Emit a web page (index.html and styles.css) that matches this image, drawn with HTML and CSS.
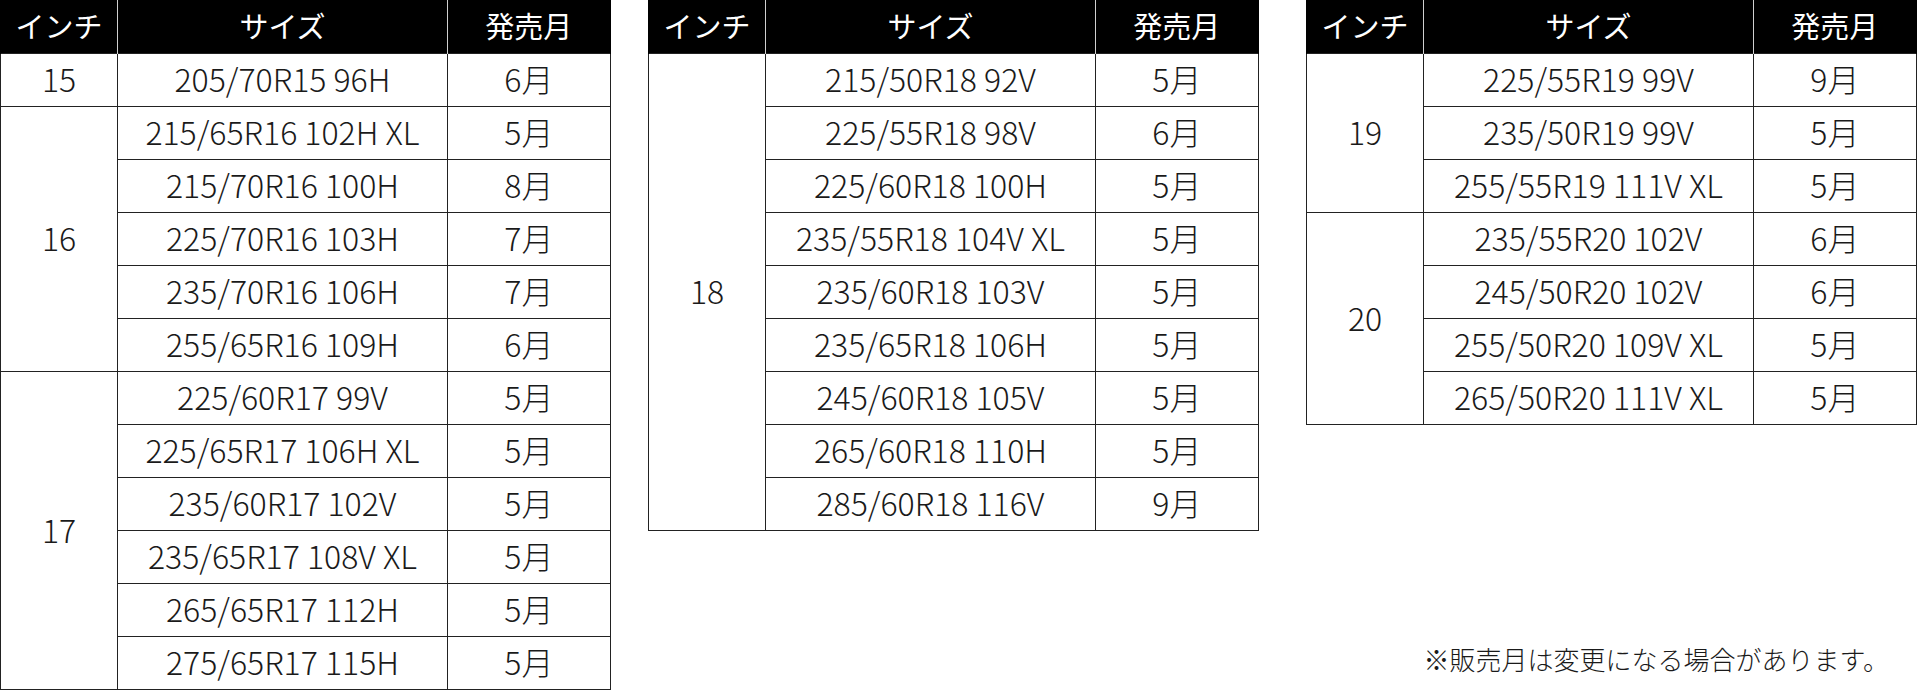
FILE: index.html
```html
<!DOCTYPE html>
<html lang="ja">
<head>
<meta charset="utf-8">
<title>発売月</title>
<link rel="stylesheet" href="styles.css">
</head>
<body>
<div class="page">
  <div class="col col-1">
    <table class="tbl">
      <thead><tr><th class="c-inch">インチ</th><th class="c-size">サイズ</th><th class="c-month">発売月</th></tr></thead>
      <tbody>
        <tr><td>15</td><td>205/70R15 96H</td><td>6月</td></tr>
        <tr><td rowspan="5">16</td><td>215/65R16 102H XL</td><td>5月</td></tr>
        <tr><td>215/70R16 100H</td><td>8月</td></tr>
        <tr><td>225/70R16 103H</td><td>7月</td></tr>
        <tr><td>235/70R16 106H</td><td>7月</td></tr>
        <tr><td>255/65R16 109H</td><td>6月</td></tr>
        <tr><td rowspan="6">17</td><td>225/60R17 99V</td><td>5月</td></tr>
        <tr><td>225/65R17 106H XL</td><td>5月</td></tr>
        <tr><td>235/60R17 102V</td><td>5月</td></tr>
        <tr><td>235/65R17 108V XL</td><td>5月</td></tr>
        <tr><td>265/65R17 112H</td><td>5月</td></tr>
        <tr><td>275/65R17 115H</td><td>5月</td></tr>
      </tbody>
    </table>
  </div>
  <div class="col col-2">
    <table class="tbl">
      <thead><tr><th class="c-inch">インチ</th><th class="c-size">サイズ</th><th class="c-month">発売月</th></tr></thead>
      <tbody>
        <tr><td rowspan="9">18</td><td>215/50R18 92V</td><td>5月</td></tr>
        <tr><td>225/55R18 98V</td><td>6月</td></tr>
        <tr><td>225/60R18 100H</td><td>5月</td></tr>
        <tr><td>235/55R18 104V XL</td><td>5月</td></tr>
        <tr><td>235/60R18 103V</td><td>5月</td></tr>
        <tr><td>235/65R18 106H</td><td>5月</td></tr>
        <tr><td>245/60R18 105V</td><td>5月</td></tr>
        <tr><td>265/60R18 110H</td><td>5月</td></tr>
        <tr><td>285/60R18 116V</td><td>9月</td></tr>
      </tbody>
    </table>
  </div>
  <div class="col col-3">
    <table class="tbl">
      <thead><tr><th class="c-inch">インチ</th><th class="c-size">サイズ</th><th class="c-month">発売月</th></tr></thead>
      <tbody>
        <tr><td rowspan="3">19</td><td>225/55R19 99V</td><td>9月</td></tr>
        <tr><td>235/50R19 99V</td><td>5月</td></tr>
        <tr><td>255/55R19 111V XL</td><td>5月</td></tr>
        <tr><td rowspan="4">20</td><td>235/55R20 102V</td><td>6月</td></tr>
        <tr><td>245/50R20 102V</td><td>6月</td></tr>
        <tr><td>255/50R20 109V XL</td><td>5月</td></tr>
        <tr><td>265/50R20 111V XL</td><td>5月</td></tr>
      </tbody>
    </table>
    <p class="note">※販売月は変更になる場合があります。</p>
  </div>
</div>
</body>
</html>
```
FILE: styles.css
```css
html, body {
  margin: 0;
  padding: 0;
  background: #ffffff;
}

body {
  font-family: "Noto Sans CJK JP", "Noto Sans", sans-serif;
  color: #1a1a1a;
}

.page {
  display: flex;
  align-items: stretch;
  width: 1920px;
  height: 692px;
}

.col {
  display: flex;
  flex-direction: column;
  width: 611px;
}

.col-2 {
  margin-left: 37px;
}

.col-3 {
  margin-left: 47px;
}

.tbl {
  border-collapse: collapse;
  table-layout: fixed;
  width: 611px;
}

.tbl th {
  box-sizing: border-box;
  background: #000000;
  color: #ffffff;
  font-weight: 400;
  font-size: 29px;
  height: 53px;
  padding: 0 0 2px 0;
  border-left: 1px solid #d0d0d0;
  line-height: 1;
}

.tbl th:first-child {
  border-left: 1px solid #000000;
}

.tbl th:last-child {
  border-right: 1px solid #000000;
}

.c-inch {
  width: 117px;
}

.c-size {
  width: 329px;
}

.c-month {
  width: 163px;
}

.tbl td {
  box-sizing: border-box;
  border: 1px solid #222222;
  height: 53px;
  padding: 0 0 3px 0;
  text-align: center;
  vertical-align: middle;
  font-size: 32px;
  font-weight: 300;
  line-height: 1;
  color: #1a1a1a;
}

.note {
  margin: auto 0 0 0;
  padding: 0 28px 20px 0;
  text-align: right;
  font-size: 26px;
  font-weight: 300;
  line-height: 1;
  color: #1a1a1a;
}
```
